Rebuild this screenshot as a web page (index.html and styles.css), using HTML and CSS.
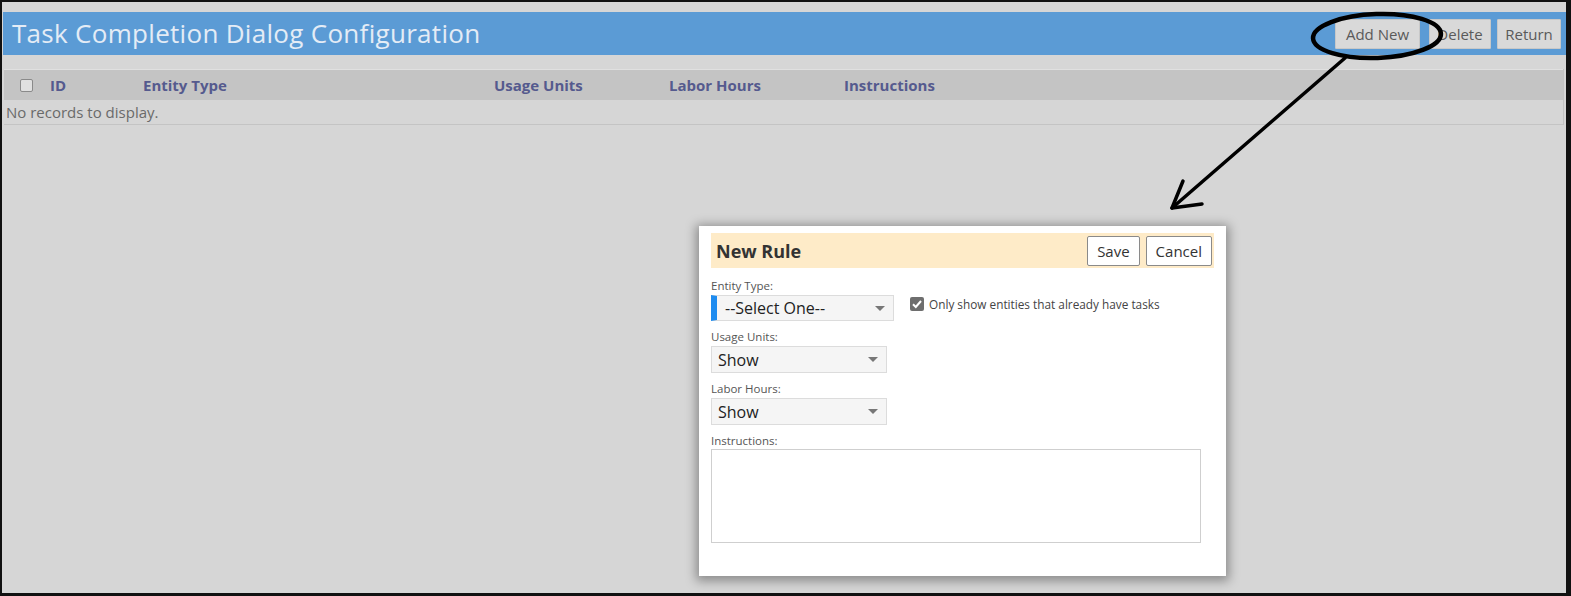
FILE: index.html
```html
<!DOCTYPE html>
<html>
<head>
<meta charset="utf-8">
<link rel="stylesheet" href="styles.css">
</head>
<body>
<div class="frame">
  <header class="titlebar">
    <h1 class="title">Task Completion Dialog Configuration</h1>
    <div class="actions">
      <button class="btn btn-add">Add New</button>
      <button class="btn btn-del">Delete</button>
      <button class="btn btn-ret">Return</button>
    </div>
  </header>
  <div class="grid">
    <div class="grid-head">
      <span class="cell c-check"><span class="chk"></span></span>
      <span class="cell c-id">ID</span>
      <span class="cell c-entity">Entity Type</span>
      <span class="cell c-usage">Usage Units</span>
      <span class="cell c-labor">Labor Hours</span>
      <span class="cell c-instr">Instructions</span>
    </div>
    <div class="grid-empty">No records to display.</div>
  </div>

  <div class="dialog">
    <div class="dlg-head">
      <span class="dlg-title">New Rule</span>
      <div class="dlg-actions">
        <button class="dbtn">Save</button>
        <button class="dbtn">Cancel</button>
      </div>
    </div>
    <div class="dlg-body">
      <label class="lbl">Entity Type:</label>
      <div class="row">
        <div class="sel sel-wide sel-req"><span>--Select One--</span><span class="caret"></span></div>
        <div class="opt"><span class="cbox"><svg viewBox="0 0 14 14" width="14" height="14"><path d="M3 7.2 L5.8 10 L11 4" fill="none" stroke="#fff" stroke-width="2"/></svg></span><span>Only show entities that already have tasks</span></div>
      </div>
      <label class="lbl">Usage Units:</label>
      <div class="sel"><span>Show</span><span class="caret"></span></div>
      <label class="lbl">Labor Hours:</label>
      <div class="sel"><span>Show</span><span class="caret"></span></div>
      <label class="lbl">Instructions:</label>
      <div class="textarea"></div>
    </div>
  </div>

  <svg class="annot" width="1571" height="596" viewBox="0 0 1571 596">
    <ellipse cx="1377" cy="36" rx="64" ry="22" fill="none" stroke="#000" stroke-width="4.5" transform="rotate(-2 1377 36)"/>
    <path d="M1345 58 L1172 208" fill="none" stroke="#000" stroke-width="3.5" stroke-linecap="round"/>
    <path d="M1183 181 L1172 208 L1202 204" fill="none" stroke="#000" stroke-width="3.5" stroke-linecap="round" stroke-linejoin="round"/>
  </svg>
</div>
</body>
</html>
```

FILE: styles.css
```css
html, body {
  margin: 0;
  padding: 0;
}
body {
  width: 1571px;
  height: 596px;
  overflow: hidden;
  font-family: "Open Sans", "Noto Sans", "Liberation Sans", sans-serif;
}
.frame {
  position: relative;
  box-sizing: border-box;
  width: 1571px;
  height: 596px;
  background: #d6d6d6;
  border-top: 2px solid #111;
  border-left: 2px solid #111;
  border-right: 5px solid #111;
  border-bottom: 3px solid #111;
  padding: 10px 0 0 1px;
}
.titlebar {
  display: flex;
  align-items: center;
  justify-content: space-between;
  height: 43px;
  background: #5b9bd5;
  padding: 0 5px 0 9px;
}
.title {
  margin: 0;
  font-weight: 400;
  font-size: 26px;
  color: #e4ecf6;
  letter-spacing: 0.3px;
  padding-bottom: 2px;
}
.actions {
  display: flex;
  align-items: center;
}
.btn {
  height: 30px;
  border: 1px solid #c8c8c8;
  background: #d9d9d9;
  color: #5a5a5a;
  font-family: inherit;
  font-size: 15px;
  padding: 0;
  border-radius: 1px;
}
.btn-add { width: 85px; }
.btn-del { width: 62px; margin-left: 9px; }
.btn-ret { width: 64px; margin-left: 6px; }
.grid {
  margin: 14px 0 0 1px;
  width: 1559px;
  border-right: 1px solid #c2c2c2;
}
.grid-head {
  display: flex;
  align-items: center;
  height: 30px;
  background: #c4c4c4;
  border-top: 1px solid #e0e0e0;
  font-weight: 700;
  font-size: 15px;
  color: #555a8e;
}
.cell { display: block; }
.c-check { width: 46px; padding-left: 16px; box-sizing: border-box; display: flex; }
.chk {
  width: 11px;
  height: 11px;
  border: 1px solid #8a8a8a;
  border-radius: 2px;
  background: #e0e0e0;
}
.c-id { width: 93px; }
.c-entity { width: 351px; }
.c-usage { width: 175px; }
.c-labor { width: 175px; }
.grid-empty {
  height: 24px;
  line-height: 24px;
  border-bottom: 1px solid #c4c4c4;
  font-size: 15px;
  color: #6a6a6a;
  padding-left: 2px;
}
.dialog {
  position: absolute;
  left: 697px;
  top: 224px;
  width: 527px;
  height: 350px;
  box-sizing: border-box;
  background: #fff;
  box-shadow: 0 2px 10px 3px rgba(0,0,0,0.35);
  padding: 7px 12px 0 12px;
}
.dlg-head {
  display: flex;
  align-items: center;
  justify-content: space-between;
  height: 35px;
  background: #feebc8;
  padding: 0 2px 0 5px;
}
.dlg-title {
  font-size: 18px;
  font-weight: 700;
  color: #333;
}
.dlg-actions { display: flex; gap: 6px; }
.dbtn {
  height: 30px;
  background: #fff;
  border: 1px solid #8a8a8a;
  border-radius: 2px;
  font-family: inherit;
  font-size: 15px;
  color: #333;
  padding: 0 9px;
}
.dlg-body {
  display: flex;
  flex-direction: column;
  align-items: flex-start;
}
.lbl {
  font-size: 11.5px;
  color: #555;
  margin-top: 7px;
  height: 17px;
  line-height: 17px;
}
.lbl:first-child { margin-top: 9px; }
.row {
  display: flex;
  align-items: flex-start;
  gap: 16px;
}
.sel {
  box-sizing: border-box;
  width: 176px;
  height: 27px;
  background: #f5f5f5;
  border: 1px solid #dcdcdc;
  display: flex;
  align-items: center;
  justify-content: space-between;
  padding: 0 8px 0 6px;
  font-size: 16px;
  color: #222;
  margin-top: 1px;
}
.sel-wide { width: 183px; height: 26px; }
.sel-req { border-left: 6px solid #1e8cf0; padding-left: 8px; }
.caret {
  width: 0; height: 0;
  border-left: 5px solid transparent;
  border-right: 5px solid transparent;
  border-top: 5px solid #777;
}
.opt {
  display: flex;
  align-items: center;
  gap: 5px;
  font-size: 11.8px;
  color: #444;
  margin-top: 2px;
}
.cbox {
  width: 14px; height: 14px;
  background: #6e6e6e;
  border-radius: 2px;
  display: flex;
}
.textarea {
  box-sizing: border-box;
  width: 490px;
  height: 94px;
  border: 1px solid #cfcfcf;
  background: #fff;
  margin-top: 0;
}
.annot {
  position: absolute;
  left: -2px;
  top: -2px;
  pointer-events: none;
}
```
